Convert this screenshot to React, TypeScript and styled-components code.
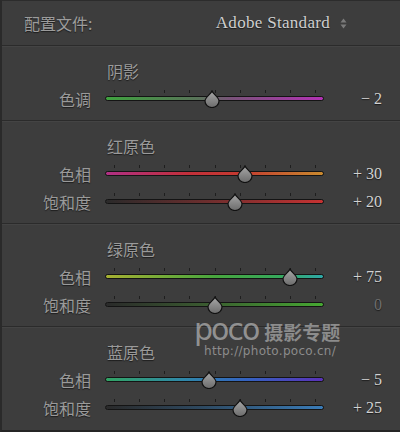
import React from 'react';
import styled, { createGlobalStyle } from 'styled-components';

const GlobalStyle = createGlobalStyle`
  html, body {
    margin: 0;
    padding: 0;
    background: #3d3d3d;
  }
`;

type SliderDef = {
  label: string;
  value: number;
  track: string;
};

type SectionDef = {
  title: string;
  sliders: SliderDef[];
};

const sections: SectionDef[] = [
  {
    title: '阴影',
    sliders: [
      { label: '色调', value: -2, track: 'linear-gradient(90deg, #3fa23f, #587358 42%, #7a527a 58%, #b232b4)' },
    ],
  },
  {
    title: '红原色',
    sliders: [
      { label: '色相', value: 30, track: 'linear-gradient(90deg, #b03085, #c2303a 38%, #c43a30 62%, #c98a2e)' },
      { label: '饱和度', value: 20, track: 'linear-gradient(90deg, #2a2a2a, #6a2e2e 45%, #c63232)' },
    ],
  },
  {
    title: '绿原色',
    sliders: [
      { label: '色相', value: 75, track: 'linear-gradient(90deg, #a6b032, #48a63e 50%, #36a85c 80%, #2ea8a8)' },
      { label: '饱和度', value: 0, track: 'linear-gradient(90deg, #2a2a2a, #3a5a30 45%, #46a832)' },
    ],
  },
  {
    title: '蓝原色',
    sliders: [
      { label: '色相', value: -5, track: 'linear-gradient(90deg, #32a464, #2f88a8 35%, #3462c0 65%, #5a32b8)' },
      { label: '饱和度', value: 25, track: 'linear-gradient(90deg, #2a2a2a, #2e4a62 45%, #3a7cb8)' },
    ],
  },
];

const formatValue = (v: number) => {
  if (v === 0) return '0';
  return v > 0 ? `+ ${v}` : `\u2212 ${Math.abs(v)}`;
};

// ticks run from 9px to 210px inside the track; the thumb travels the same range
const TICK_START = 9;
const TICK_SPAN = 201;

const Thumb: React.FC = () => (
  <svg width="16" height="18" viewBox="0 0 16 18">
    <defs>
      <linearGradient id="thumbFill" x1="0" y1="0" x2="0" y2="1">
        <stop offset="0" stopColor="#a8a8a8" />
        <stop offset="1" stopColor="#6c6c6c" />
      </linearGradient>
    </defs>
    <path
      d="M8 1 C 9 4, 15 7, 15 11 A 7 6.5 0 0 1 1 11 C 1 7, 7 4, 8 1 Z"
      fill="url(#thumbFill)"
      stroke="#111"
      strokeWidth="1.2"
    />
  </svg>
);

const Slider: React.FC<{ value: number; track: string }> = ({ value, track }) => {
  const center = TICK_START + ((value + 100) / 200) * TICK_SPAN;
  return (
    <SliderBox>
      <Ticks>
        {Array.from({ length: 9 }).map((_, i) => (
          <Tick key={i} style={{ left: TICK_START + i * (TICK_SPAN / 8) }} />
        ))}
      </Ticks>
      <Track style={{ background: track }} />
      <ThumbHolder style={{ left: center - 8 }}>
        <Thumb />
      </ThumbHolder>
    </SliderBox>
  );
};

export default function App() {
  return (
    <>
      <GlobalStyle />
      <Panel>
        <Header>
          <HeaderLabel>配置文件:</HeaderLabel>
          <Profile>
            Adobe Standard
            <Stepper>
              <svg width="7" height="11" viewBox="0 0 7 11">
                <path d="M3.5 0.5 L6.5 4.5 L0.5 4.5 Z" fill="#7a7a7a" />
                <path d="M3.5 10.5 L6.5 6.5 L0.5 6.5 Z" fill="#7a7a7a" />
              </svg>
            </Stepper>
          </Profile>
        </Header>
        {sections.map((s) => (
          <Section key={s.title}>
            <SectionTitle>{s.title}</SectionTitle>
            {s.sliders.map((sl) => (
              <Row key={sl.label}>
                <Label>{sl.label}</Label>
                <Slider value={sl.value} track={sl.track} />
                <Value $zero={sl.value === 0}>{formatValue(sl.value)}</Value>
              </Row>
            ))}
          </Section>
        ))}
        <Watermark>
          <WatermarkTop>
            <Poco>poco</Poco>
            <PocoCn>摄影专题</PocoCn>
          </WatermarkTop>
          <PocoUrl>http://photo.poco.cn/</PocoUrl>
        </Watermark>
      </Panel>
    </>
  );
}

const Panel = styled.div`
  position: relative;
  width: 400px;
  height: 432px;
  box-sizing: border-box;
  background: #3d3d3d;
  border-left: 2px solid #2a2a2a;
  border-top: 1px solid #2c2c2c;
  border-bottom: 2px solid #252525;
  overflow: hidden;
  font-family: 'Noto Sans CJK SC', sans-serif;
`;

const Header = styled.div`
  height: 44px;
  display: flex;
  align-items: center;
  padding-left: 22px;
  padding-right: 53px;
`;

const HeaderLabel = styled.div`
  font-size: 16px;
  color: #9c9c9c;
  text-shadow: 0 1px 1px rgba(0, 0, 0, 0.55);
`;

const Profile = styled.div`
  margin-left: auto;
  display: flex;
  align-items: center;
  gap: 10px;
  font-family: 'Liberation Serif', serif;
  font-size: 17px;
  letter-spacing: 0.3px;
  color: #cfcfcf;
  text-shadow: 0 1px 1px rgba(0, 0, 0, 0.6);
`;

const Stepper = styled.span`
  display: flex;
  align-items: center;
`;

const Section = styled.div`
  border-top: 1px solid #2b2b2b;
  box-shadow: inset 0 1px 0 #444444;
  padding: 15px 0 7px;
`;

const SectionTitle = styled.div`
  height: 20px;
  line-height: 20px;
  margin: 0 0 4px 105px;
  font-size: 16px;
  color: #9a9a9a;
  text-shadow: 0 1px 1px rgba(0, 0, 0, 0.55);
`;

const Row = styled.div`
  height: 28px;
  display: flex;
  align-items: center;
`;

const Label = styled.div`
  width: 89px;
  text-align: right;
  font-size: 16px;
  color: #9a9a9a;
  text-shadow: 0 1px 1px rgba(0, 0, 0, 0.55);
`;

const SliderBox = styled.div`
  position: relative;
  width: 219px;
  height: 28px;
  margin-left: 14px;
`;

const Ticks = styled.div`
  position: absolute;
  left: 0;
  right: 0;
  top: 5px;
  height: 4px;
`;

const Tick = styled.span`
  position: absolute;
  top: 0;
  width: 1px;
  height: 3px;
  background: #1e1e1e;
`;

const Track = styled.div`
  position: absolute;
  left: 0;
  right: 0;
  top: 11px;
  height: 3px;
  border: 1px solid #141414;
  border-radius: 3px;
`;

const ThumbHolder = styled.div`
  position: absolute;
  top: 5px;
  width: 16px;
  height: 18px;
  display: flex;
`;

const Value = styled.div<{ $zero: boolean }>`
  flex: 1;
  text-align: right;
  padding-right: 18px;
  font-family: 'Liberation Serif', serif;
  font-size: 16px;
  color: ${(p) => (p.$zero ? '#6e6e6e' : '#d2d2d2')};
  text-shadow: 0 1px 1px rgba(0, 0, 0, 0.6);
`;

const Watermark = styled.div`
  position: absolute;
  left: 192px;
  top: 314px;
  display: flex;
  flex-direction: column;
  pointer-events: none;
`;

const WatermarkTop = styled.div`
  display: flex;
  align-items: baseline;
  gap: 6px;
`;

const Poco = styled.span`
  font-family: 'DejaVu Sans', sans-serif;
  font-size: 30px;
  line-height: 30px;
  letter-spacing: -2px;
  color: rgba(220, 220, 220, 0.55);
`;

const PocoCn = styled.span`
  font-family: 'Noto Sans CJK SC', sans-serif;
  font-weight: 700;
  font-size: 19px;
  color: rgba(220, 220, 220, 0.5);
`;

const PocoUrl = styled.span`
  margin-left: 10px;
  margin-top: -1px;
  font-family: 'DejaVu Sans', sans-serif;
  font-size: 12px;
  letter-spacing: 0.3px;
  color: rgba(220, 220, 220, 0.5);
`;
